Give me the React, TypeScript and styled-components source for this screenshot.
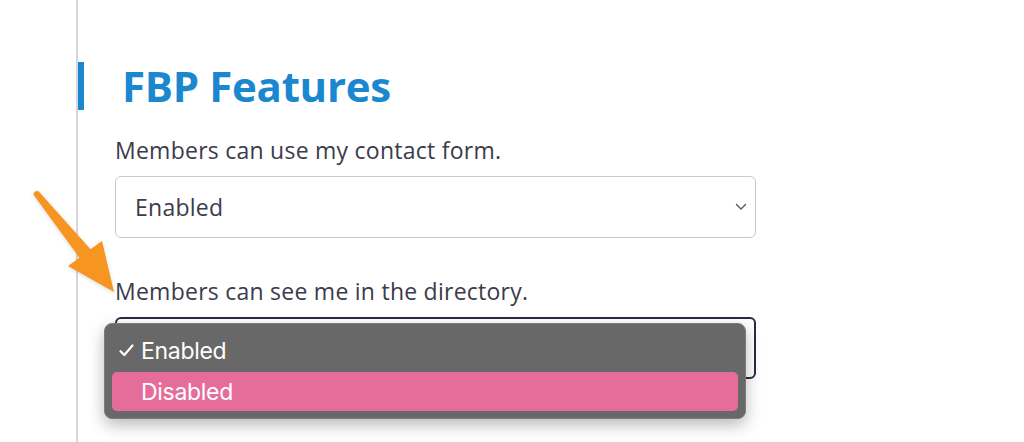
import React from 'react';
import styled, { createGlobalStyle } from 'styled-components';

const GlobalStyle = createGlobalStyle`
  html, body {
    margin: 0;
    padding: 0;
    background: #fff;
  }
  body {
    font-family: "Open Sans", Lato, sans-serif;
    color: #3b3b4b;
  }
`

const Page = styled.div`
  display: flex;
  min-height: 442px;
  overflow: hidden;
  position: relative;
`

const Gutter = styled.div`
  width: 76px;
  flex-shrink: 0;
  border-right: 2px solid #d6d6dc;
`

const Content = styled.div`
  flex: 1;
  padding-top: 62px;
`

const SectionTitle = styled.h2`
  margin: 0;
  height: 48px;
  border-left: 6px solid #1a87cf;
  padding-left: 38px;
  font-size: 42px;
  line-height: 48px;
  font-weight: 700;
  letter-spacing: -0.3px;
  color: #1a87cf;
`

const Form = styled.div`
  padding-left: 37px;
  padding-top: 25px;
  display: flex;
  flex-direction: column;
  gap: 38px;
`

const Field = styled.div`
  display: flex;
  flex-direction: column;
  gap: 11px;
`

const Label = styled.label`
  font-size: 23px;
  line-height: 30px;
  letter-spacing: 0.25px;
  color: #3b3b4b;
`

const SelectBox = styled.div<{ $focused?: boolean }>`
  position: relative;
  box-sizing: border-box;
  width: 641px;
  height: 62px;
  display: flex;
  align-items: center;
  padding-left: ${p => (p.$focused ? 18 : 19)}px;
  border: ${p => (p.$focused ? '2px solid #2a2a42' : '1px solid #c9c9d1')};
  border-radius: 6px;
  font-size: 23px;
  letter-spacing: 0.25px;
  color: #3b3b4b;
  background: #fff;
`

const Chevron = styled.svg`
  position: absolute;
  right: 8px;
  top: 50%;
  margin-top: -4px;
`

const Menu = styled.div`
  position: absolute;
  left: -13px;
  top: 4px;
  width: 642px;
  height: 96px;
  box-sizing: border-box;
  padding: 7px 7px;
  background: #686868;
  border: 1px solid #7c7c7c;
  border-radius: 8px;
  box-shadow: 0 6px 16px rgba(0, 0, 0, 0.28);
  display: flex;
  flex-direction: column;
  gap: 2px;
  font-family: Inter, "Liberation Sans", sans-serif;
  letter-spacing: -0.3px;
  z-index: 10;
`

const MenuItem = styled.div<{ $active?: boolean }>`
  height: 39px;
  display: flex;
  align-items: center;
  padding-left: 7px;
  border-radius: 5px;
  background: ${p => (p.$active ? '#e66d9a' : 'transparent')};
  color: #fff;
  font-size: 23px;
`

const Check = styled.svg`
  width: 15px;
  height: 13px;
  margin-right: 7px;
  flex-shrink: 0;
`

const CheckSpacer = styled.span`
  width: 22px;
  flex-shrink: 0;
`

const Arrow = styled.svg`
  position: absolute;
  left: 0;
  top: 0;
  pointer-events: none;
  filter: drop-shadow(0 1px 2px rgba(0, 0, 0, 0.15));
`

const ChevronIcon = () => (
  <Chevron width="12" height="8" viewBox="0 0 12 8">
    <path d="M1.5 1.5 L6 6 L10.5 1.5" fill="none" stroke="#555" strokeWidth="1.3" strokeLinecap="round" strokeLinejoin="round" />
  </Chevron>
);

const App = () => {
  return (
    <>
      <GlobalStyle />
      <Page>
        <Gutter />
        <Content>
          <SectionTitle>FBP Features</SectionTitle>
          <Form>
            <Field>
              <Label>Members can use my contact form.</Label>
              <SelectBox>
                Enabled
                <ChevronIcon />
              </SelectBox>
            </Field>
            <Field>
              <Label>Members can see me in the directory.</Label>
              <SelectBox $focused>
                Enabled
                <ChevronIcon />
                <Menu>
                  <MenuItem>
                    <Check viewBox="0 0 15 13">
                      <path d="M1.5 7.2 L5.3 11 L13.5 1.5" fill="none" stroke="#fff" strokeWidth="2.2" strokeLinecap="round" strokeLinejoin="round" />
                    </Check>
                    Enabled
                  </MenuItem>
                  <MenuItem $active>
                    <CheckSpacer />
                    Disabled
                  </MenuItem>
                </Menu>
              </SelectBox>
            </Field>
          </Form>
        </Content>
        <Arrow width="130" height="310" viewBox="0 0 130 310">
          <path
            d="M38.3 191.1 L90.5 249.2 L102 241 L114 292 L68 266 L79.5 257.8 L33.7 194.9 Q33 191 38.3 191.1 Z"
            fill="#f6951f"
            strokeLinejoin="round"
          />
        </Arrow>
      </Page>
    </>
  );
};

export default App;
